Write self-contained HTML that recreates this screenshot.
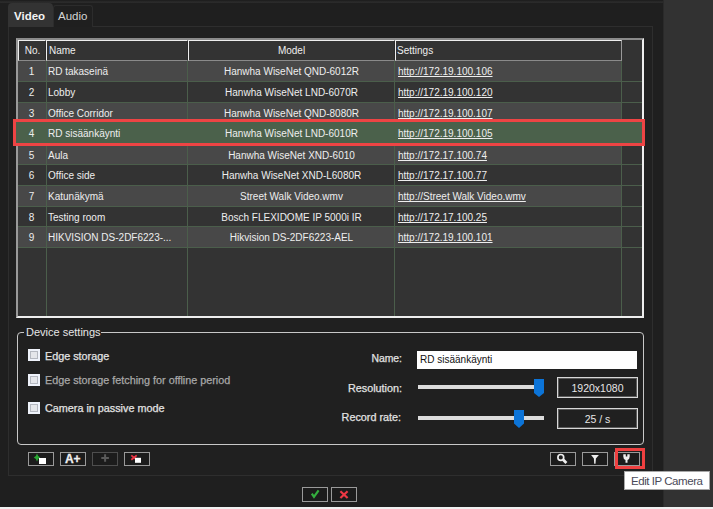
<!DOCTYPE html>
<html><head><meta charset="utf-8">
<style>
*{box-sizing:border-box;margin:0;padding:0}
html,body{width:713px;height:509px;overflow:hidden;background:#323232;font-family:"Liberation Sans",sans-serif;}
.a{position:absolute}
#dlg{left:0;top:0;width:664px;height:507px;background:#1f1f1f;border-right:1px solid #2a2a2a}
#bot{left:0;top:507px;width:713px;height:2px;background:#f0f0f0}
#topline{left:0;top:1px;width:663px;height:2px;background:linear-gradient(#262626,#2c2c2c)}
#panel{left:8px;top:26px;width:645px;height:450px;background:#202020;border:1px solid #2e2e2e}
#tabv{left:8px;top:3px;width:45px;height:24px;background:#333;border-radius:4px 4px 0 0;color:#f4f4f4;font-weight:bold;font-size:11.5px;line-height:26px;padding-left:6px}
#taba{left:53px;top:5px;width:40px;height:22px;background:#1f1f1f;border:1px solid #2c2c2c;border-bottom:none;border-radius:3px 3px 0 0;color:#d4d4d4;font-size:11.5px;line-height:21px;padding-left:4px}
#tbl{left:16px;top:38px;width:628px;height:280px;background:#333333;border-left:2px solid #9a9a9a;border-top:2px solid #8a8a8a;border-right:2px solid #eeeeee;border-bottom:2px solid #eeeeee}
.hd{top:40px;height:21px;background:#333;border-left:1px solid #eee;border-top:1px solid #eee;border-right:1px solid #2a2a2a;border-bottom:1px solid #8a8a8a;color:#eee;font-size:10px;line-height:19px;white-space:nowrap}
.row{left:18px;width:603px;height:21px;border-bottom:1px solid #4b5e4b;color:#eee;font-size:10px;line-height:20px;white-space:nowrap}
.row.o{background:#484848}
.row.e{background:#333333}
.vl{width:1px;background:#4b5e4b;top:61px;height:255px}
.c{position:absolute;top:1px}
.c1{left:1px;width:25px;text-align:center}
.c2{left:30px}
.c3{left:170px;width:207px;text-align:center}
.c4{left:380px;text-decoration:underline;text-decoration-skip-ink:none}
#hl{left:13px;top:119px;width:632px;height:27px;border:3px solid #ee4444}

#grp{left:17px;top:332px;width:627px;height:113px;border:1px solid #c8c8c8;border-radius:4px}
#legend{left:24px;top:325px;padding:0 0 0 2px;background:#202020;color:#e6e6e6;font-size:11px;line-height:14px}
.cb{left:28px;width:12px;height:12px;background:#e4e6ea;border:2px solid #eef2fa;box-shadow:inset 0 0 0 1px #b4b8c0}
.lbl{color:#e2e2e2;font-size:10.8px;-webkit-text-stroke:0.25px;line-height:13px;white-space:nowrap;margin-top:1px}
.rl{right:311px;text-align:right}
#name{left:417px;top:351px;width:220px;height:18px;background:#fff;color:#111;font-size:10px;line-height:18px;padding-left:3px}
.trk{left:418px;height:4px;background:#dcdcdc}
.val{left:557px;width:81px;height:21px;border:1px solid #d8d8d8;box-shadow:inset 0 0 0 1px #5a5a5a;color:#e6e6e6;font-size:10.5px;line-height:19px;padding-top:1px;text-align:center}

.btn{top:452px;width:26px;height:14px;border:1px solid #9a9a9a;background:#1c1c1c}
.ic{position:absolute;left:-1px;top:-1px}
#tip{left:624px;top:471px;width:86px;height:19px;background:#fff;border:1px solid #a8a8a8;color:#4a4a58;font-size:11.5px;letter-spacing:-0.45px;line-height:18px;padding-left:6px;white-space:nowrap}
</style></head><body>
<div class="a" id="dlg"></div>
<div class="a" id="topline"></div>
<div class="a" id="bot"></div>
<div class="a" id="panel"></div>
<div class="a" id="tabv">Video</div>
<div class="a" id="taba">Audio</div>
<div class="a" id="tbl"></div>
<div class="a hd" style="left:18px;width:28px;text-align:center;padding-left:1px">No.</div>
<div class="a hd" style="left:46px;width:142px;padding-left:2px">Name</div>
<div class="a hd" style="left:188px;width:207px;text-align:center">Model</div>
<div class="a hd" style="left:395px;width:227px;padding-left:1px;border-right-color:#999">Settings</div>

<div class="a row o" style="top:61px;height:21px"><span class="c c1">1</span><span class="c c2">RD takaseinä</span><span class="c c3">Hanwha WiseNet QND-6012R</span><span class="c c4">http://172.19.100.106</span></div>
<div class="a row e" style="top:82px;height:21px"><span class="c c1">2</span><span class="c c2">Lobby</span><span class="c c3">Hanwha WiseNet LND-6070R</span><span class="c c4">http://172.19.100.120</span></div>
<div class="a row o" style="top:103px;height:21px"><span class="c c1">3</span><span class="c c2">Office Corridor</span><span class="c c3">Hanwha WiseNet QND-8080R</span><span class="c c4">http://172.19.100.107</span></div>

<div class="a row o" style="top:145px;height:20px"><span class="c c1">5</span><span class="c c2">Aula</span><span class="c c3">Hanwha WiseNet XND-6010</span><span class="c c4">http://172.17.100.74</span></div>
<div class="a row e" style="top:165px;height:21px"><span class="c c1">6</span><span class="c c2">Office side</span><span class="c c3">Hanwha WiseNet XND-L6080R</span><span class="c c4">http://172.17.100.77</span></div>
<div class="a row o" style="top:186px;height:21px"><span class="c c1">7</span><span class="c c2">Katunäkymä</span><span class="c c3">Street Walk Video.wmv</span><span class="c c4">http://Street Walk Video.wmv</span></div>
<div class="a row e" style="top:207px;height:20px"><span class="c c1">8</span><span class="c c2">Testing room</span><span class="c c3">Bosch FLEXIDOME IP 5000i IR</span><span class="c c4">http://172.17.100.25</span></div>
<div class="a row o" style="top:227px;height:21px"><span class="c c1">9</span><span class="c c2">HIKVISION DS-2DF6223-...</span><span class="c c3">Hikvision DS-2DF6223-AEL</span><span class="c c4">http://172.19.100.101</span></div>
<div class="a vl" style="left:46px"></div>
<div class="a vl" style="left:187px"></div>
<div class="a vl" style="left:394px"></div>
<div class="a vl" style="left:621px"></div>

<div class="a" style="left:621px;top:81px;width:21px;height:1px;background:#4b5e4b"></div><div class="a" style="left:621px;top:102px;width:21px;height:1px;background:#4b5e4b"></div><div class="a" style="left:621px;top:123px;width:21px;height:1px;background:#4b5e4b"></div><div class="a" style="left:621px;top:144px;width:21px;height:1px;background:#4b5e4b"></div><div class="a" style="left:621px;top:164px;width:21px;height:1px;background:#4b5e4b"></div><div class="a" style="left:621px;top:185px;width:21px;height:1px;background:#4b5e4b"></div><div class="a" style="left:621px;top:206px;width:21px;height:1px;background:#4b5e4b"></div><div class="a" style="left:621px;top:226px;width:21px;height:1px;background:#4b5e4b"></div><div class="a" style="left:621px;top:247px;width:21px;height:1px;background:#4b5e4b"></div><div class="a row e" style="top:122px;height:23px;background:#4b614b;left:16px;width:626px;padding-left:2px;padding-top:1px"><div style="position:relative"><span class="c c1">4</span><span class="c c2">RD sisäänkäynti</span><span class="c c3">Hanwha WiseNet LND-6010R</span><span class="c c4">http://172.19.100.105</span></div></div>
<div class="a" id="hl"></div>

<div class="a" id="grp"></div>
<div class="a" id="legend">Device settings</div>
<div class="a cb" style="top:349px"></div>
<div class="a cb" style="top:374px"></div>
<div class="a cb" style="top:402px"></div>
<div class="a lbl" style="left:45px;top:349px">Edge storage</div>
<div class="a lbl" style="left:45px;top:373px;color:#a8a8a8">Edge storage fetching for offline period</div>
<div class="a lbl" style="left:45px;top:401px">Camera in passive mode</div>
<div class="a lbl rl" style="top:351px;font-size:10.4px">Name:</div>
<div class="a lbl rl" style="top:381px">Resolution:</div>
<div class="a lbl rl" style="top:410px;right:312px">Record rate:</div>
<div class="a" id="name">RD sisäänkäynti</div>
<div class="a trk" style="top:385px;width:125px"></div>
<div class="a trk" style="top:416px;width:126px"></div>
<svg class="a" style="left:534px;top:379px" width="10" height="18" viewBox="0 0 10 18"><path d="M0 0H10V14L5 18L0 14Z" fill="#0c74d8"/></svg>
<svg class="a" style="left:514px;top:410px" width="10" height="18" viewBox="0 0 10 18"><path d="M0 0H10V13.5L5 18L0 13.5Z" fill="#0c74d8"/></svg>
<div class="a val" style="top:377px">1920x1080</div>
<div class="a val" style="top:408px">25 / s</div>

<div class="a btn" style="left:28px"><svg class="ic" width="26" height="14" viewBox="0 0 26 14"><path d="M9 1.6Q9.6 4.6 12.2 5.5Q9.6 6.4 9 9.4Q8.4 6.4 5.8 5.5Q8.4 4.6 9 1.6Z" fill="#2aa834"/><rect x="11" y="6" width="7" height="6" fill="#fff"/></svg></div>
<div class="a btn" style="left:60px"><span class="a" style="left:4px;top:-1px;font-size:12px;font-weight:bold;color:#f0f0f0;line-height:14px;letter-spacing:-0.2px;-webkit-text-stroke:0.3px #f0f0f0">A+</span></div>
<div class="a btn" style="left:92px;border-color:#4e4e4e"><svg class="ic" width="26" height="14" viewBox="0 0 26 14"><path d="M13.1 2.2V9.8M9.3 6H16.9" stroke="#5a5a5a" stroke-width="2"/></svg></div>
<div class="a btn" style="left:124px"><svg class="ic" width="26" height="14" viewBox="0 0 26 14"><path d="M7.3 3.4L12.7 7.8M12.7 3.4L7.3 7.8" stroke="#ec3444" stroke-width="1.8"/><rect x="11" y="5.8" width="6" height="5" fill="#fff"/></svg></div>
<div class="a btn" style="left:550px"><svg class="ic" width="26" height="14" viewBox="0 0 26 14"><circle cx="10.8" cy="5.4" r="2.9" fill="none" stroke="#eee" stroke-width="1.7"/><path d="M13.2 7.8L16.4 11" stroke="#eee" stroke-width="2.8"/></svg></div>
<div class="a btn" style="left:582px"><svg class="ic" width="26" height="14" viewBox="0 0 26 14"><path d="M9.1 2.9H16.9L13.9 6.6L13.5 11.8H12.2L11.9 6.6Z" fill="#eee"/></svg></div>
<div class="a btn" style="left:614px"><svg class="ic" width="26" height="14" viewBox="0 0 26 14"><path d="M9.3 2.3H11.8V4.6H13.3V2.3H15.7V4.4Q15.7 7.2 13.5 7.9V10.7H11.5V7.9Q9.3 7.2 9.3 4.4Z" fill="#eee"/></svg></div>
<div class="a" style="left:615px;top:448px;width:30px;height:21px;border:3px solid #ee4040"></div>
<div class="a btn" style="left:302px;top:487px;height:15px"><svg class="ic" width="26" height="15" viewBox="0 0 26 15"><path d="M9.8 6.6L12 9.9L16.6 3.4" fill="none" stroke="#34ae3e" stroke-width="2.2"/></svg></div>
<div class="a btn" style="left:331px;top:487px;height:15px"><svg class="ic" width="26" height="15" viewBox="0 0 26 15"><path d="M9.4 4.2L16.6 11M16.6 4.2L9.4 11" stroke="#ee3844" stroke-width="2.2"/></svg></div>
<div class="a" id="tip">Edit IP Camera</div>
</body></html>
